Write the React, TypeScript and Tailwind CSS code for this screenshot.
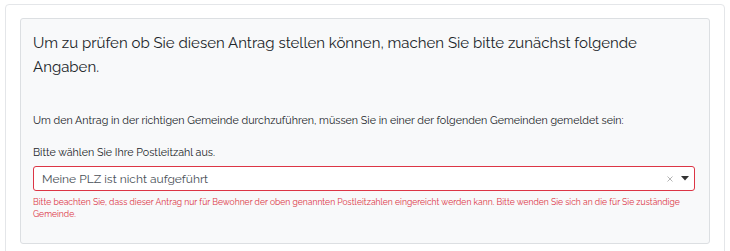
export default function App() {
  return (
    <div className="h-[251px] overflow-hidden bg-white" style={{ fontFamily: "Raleway, Lato, 'Noto Sans', sans-serif" }}>
      <div className="pt-[4px] pl-[5px]">
        <div className="w-[720px] h-[260px] rounded-[4px] border border-[#e4e6e9] bg-white pl-[14px] pt-[13px] pr-[14px]">
          <div className="w-[690px] rounded-[3px] border border-[#dcdfe2] bg-[#f8f9fa] pl-[12px] pr-[12px] pt-[12px] pb-[23px] text-[#212529]">
            <h4 className="text-[15px] leading-[24px] font-normal">
              Um zu prüfen ob Sie diesen Antrag stellen können, machen Sie bitte zunächst folgende Angaben.
            </h4>
            <p className="mt-[34px] text-[10.7px] leading-[16px]">
              Um den Antrag in der richtigen Gemeinde durchzuführen, müssen Sie in einer der folgenden Gemeinden gemeldet sein:
            </p>
            <p className="mt-[16px] text-[10.7px] leading-[16px]">Bitte wählen Sie Ihre Postleitzahl aus.</p>
            <div className="mt-[5px] flex h-[25px] w-[662px] items-center rounded-[3px] border border-[#dc3545] bg-white pl-[8px] pr-[5px]">
              <span className="flex-1 text-[12px] text-[#495057]">Meine PLZ ist nicht aufgeführt</span>
              <svg className="mr-[8px]" width="6" height="6" viewBox="0 0 6 6">
                <path d="M0.5 0.5L5.5 5.5M5.5 0.5L0.5 5.5" stroke="#b5b5b5" strokeWidth="1" />
              </svg>
              <svg width="8" height="5" viewBox="0 0 8 5"><path d="M0 0h8L4 4.5z" fill="#333" /></svg>
            </div>
            <p className="mt-[5px] text-[8.55px] leading-[12px] text-[#dc3545]">
              Bitte beachten Sie, dass dieser Antrag nur für Bewohner der oben genannten Postleitzahlen eingereicht werden kann. Bitte wenden Sie sich an die für Sie zuständige Gemeinde.
            </p>
          </div>
        </div>
      </div>
    </div>
  );
}
